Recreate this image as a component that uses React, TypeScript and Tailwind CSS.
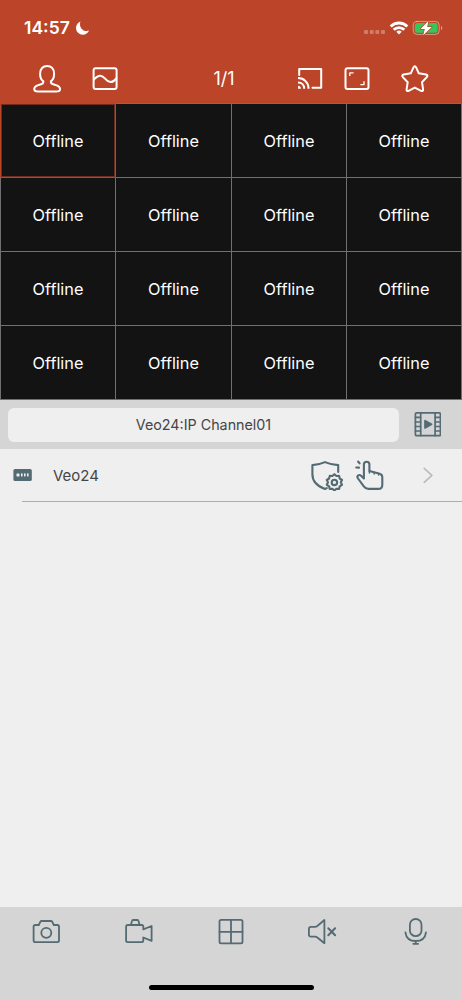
import React from "react";

type IconProps = {
  w: number;
  h: number;
  className?: string;
  sw?: number;
  children: React.ReactNode;
};

function Icon({ w, h, className = "", sw = 2, children }: IconProps) {
  return (
    <svg
      width={w}
      height={h}
      viewBox={`0 0 ${w} ${h}`}
      fill="none"
      stroke="currentColor"
      strokeWidth={sw}
      strokeLinecap="round"
      strokeLinejoin="round"
      className={`block shrink-0 ${className}`}
    >
      {children}
    </svg>
  );
}

function StatusBar() {
  return (
    <div className="flex h-[55px] items-center text-white">
      <span className="ml-[24px] w-[51px] text-[17.5px] leading-[20px] font-semibold whitespace-nowrap">14:57</span>
      <Icon w={16} h={16}>
        <path
          d="M5.4 1.4C3 2.4 1 4.8 1 8a6.8 6.8 0 0 0 6.8 6.8c2.8 0 5.2-1.7 6.2-4.2-4.9 1.7-10.6-2.3-8.6-9.2z"
          fill="currentColor"
          stroke="none"
        />
      </Icon>
      <Icon w={22} h={6} className="ml-[272px] mt-[9px] opacity-30">
        <g fill="currentColor" stroke="none">
          <rect x="1" y="1" width="4" height="4" rx="1" />
          <rect x="6.7" y="1" width="4" height="4" rx="1" />
          <rect x="12.3" y="1" width="4" height="4" rx="1" />
          <rect x="18" y="1" width="4" height="4" rx="1" />
        </g>
      </Icon>
      <Icon w={20} h={16} sw={2.9} className="ml-[4px]">
        <g strokeLinecap="butt">
          <path d="M1.7 6.4a11.7 11.7 0 0 1 16.6 0" />
          <path d="M4.7 9.8a7.5 7.5 0 0 1 10.6 0" />
        </g>
        <path d="M10 14.6l-2.7-2.8a3.9 3.9 0 0 1 5.4 0z" fill="currentColor" stroke="none" />
      </Icon>
      <Icon w={32} h={18} sw={1} className="ml-[3px]">
        <rect x="1.2" y="2.4" width="26" height="13" rx="3.8" className="opacity-45" />
        <path d="M29 6.7c1.8.7 1.8 3.7 0 4.4z" fill="currentColor" stroke="none" className="opacity-50" />
        <rect x="2.8" y="4" width="22.8" height="9.8" rx="2.2" fill="#35c759" stroke="none" />
        <path d="M16.4 1.8 8.6 10h4.2l-1.6 6.2L19.8 8h-4.6z" fill="white" stroke="#bb4429" strokeWidth="1.3" paintOrder="stroke" />
      </Icon>
    </div>
  );
}

function Toolbar() {
  return (
    <div className="flex h-[48px] items-center text-white">
      <Icon w={30} h={32} sw={2} className="ml-[32px]">
        <path d="M11.4 18.4C9 16.8 8.1 14 8.1 10.7 8.1 5.9 11 3 15.1 3s7 2.9 7 7.7c0 3.3-.9 6.1-3.3 7.7 0 1.7.3 2.1 1.7 2.6l4.1 1.4c2.2.8 3.5 2 3.5 3.6 0 2.2-2 2.6-4 2.6H6.1c-2 0-3.9-.4-3.9-2.6 0-1.6 1.3-2.8 3.4-3.6L9.7 21c1.4-.5 1.7-.9 1.7-2.6z" />
      </Icon>
      <Icon w={28} h={26} className="ml-[29px]">
        <rect x="2.6" y="2.2" width="23" height="20.8" rx="2" />
        <path d="M2.9 13.5C8.2 7.7 11.3 9.3 14.1 12.7c3.5 4.3 7.1 4.8 11.2-.2" />
      </Icon>
      <span className="ml-[84px] w-[42px] text-center text-[18px] leading-[22px]">1/1</span>
      <Icon w={30} h={26} className="ml-[50px]">
        <path d="M4.2 9V2.9h22v18.8h-8.7" />
        <g strokeLinecap="butt">
          <path d="M3 12.1c6 0 10.6 4.5 10.6 10.6M3 16.5c3.8 0 6.2 2.5 6.2 6.2" />
        </g>
        <path d="M3 19.8c1.7 0 2.9 1.2 2.9 2.9H3z" fill="currentColor" stroke="none" />
      </Icon>
      <Icon w={28} h={26} className="ml-[18px]">
        <rect x="2.5" y="2.2" width="23" height="20.8" rx="2" />
        <path d="M6.8 10V6.9h3.8M21 15.2v3.4h-3.6" strokeWidth="1.3" strokeLinecap="butt" />
      </Icon>
      <Icon w={30} h={30} className="ml-[29px]">
        <path d="M13.6 3.2c.5-1.2 1.9-1.2 2.4 0l2.8 6.1 7.2 1.2c1.5.3 1.9 1.6.8 2.6L22 18.2l1.1 7.1c.2 1.5-.8 2.1-2 1.5l-6.3-3.2-6.2 3.2c-1.3.6-2.2 0-2-1.5l1.1-7.1-4.9-5.1c-1-1-.6-2.3.8-2.6l7.2-1.2z" />
      </Icon>
    </div>
  );
}

function ChannelGrid() {
  return (
    <div className="grid h-[297px] grid-cols-[114px_115px_114px_114px] grid-rows-[73px_73px_73px_73px] gap-px bg-[#707070] p-px text-white">
      {Array.from({ length: 16 }, (_, i) => (
        <div
          key={i}
          className={`flex items-center justify-center bg-[#131313] pt-px text-[16.3px] leading-[20px] ${
            i === 0 ? "inset-ring inset-ring-[#6e2d1e] outline outline-[#bb4429]" : ""
          }`}
        >
          Offline
        </div>
      ))}
    </div>
  );
}

function ChannelBar() {
  return (
    <div className="flex h-[49px] items-center bg-[#d5d5d5] pl-[8px] text-[#546b74]">
      <div className="flex h-[34px] w-[391px] items-center justify-center rounded-[6px] bg-[#efefef] pt-px text-[14.3px] text-[#454545]">
        Veo24:IP Channel01
      </div>
      <Icon w={28} h={26} sw={1.7} className="ml-[14px]">
        <rect x="2.4" y="0.9" width="25" height="22.8" rx="1.2" />
        <path d="M7.7 1v22.6M22.1 1v22.6" />
        <path d="M2.4 5.4h5M2.4 10h5M2.4 14.5h5M2.4 19h5M22.4 5.4h5M22.4 10h5M22.4 14.5h5M22.4 19h5" />
        <path d="M12 8.7v7.2l6.6-3.6z" fill="currentColor" />
      </Icon>
    </div>
  );
}

function DeviceRow() {
  return (
    <div className="flex h-[52px] items-center text-[#546b74]">
      <Icon w={20} h={14} className="ml-[13px]">
        <rect x="0.4" y="1" width="18.4" height="12" rx="1.6" fill="currentColor" stroke="none" />
        <g fill="#efefef" stroke="none">
          <rect x="3.5" y="5.4" width="3" height="3" rx=".6" />
          <rect x="8" y="5.4" width="1.6" height="3" />
          <rect x="11" y="5.4" width="1.6" height="3" />
          <rect x="14" y="5.4" width="1.6" height="3" />
        </g>
      </Icon>
      <span className="ml-[20px] w-[257px] pt-[2px] text-[15px] text-[#454545]">Veo24</span>
      <Icon w={34} h={32} sw={2.1}>
        <path d="M28.2 13V6.1c-4.8 0-8.4-1-13.2-3-4.6 2-8.2 3-12.6 3v9.2c0 6.5 4.6 11.8 12.6 14.7l1.8-.9" />
        <path d="m24.4 15.2 2 1.8 2.7-.1.6 2.6 2.3 1.5-1.2 2.4 1.2 2.4-2.3 1.5-.6 2.6-2.7-.1-2 1.7-2-1.7-2.7.1-.6-2.6-2.3-1.5 1.2-2.4-1.2-2.4 2.3-1.5.6-2.6 2.7.1z" />
        <circle cx="24.4" cy="23.4" r="2.7" />
      </Icon>
      <Icon w={32} h={34} sw={2.1} className="ml-[10px]">
        <path d="M9.9 20.5V6.5c0-3.7 5.5-3.7 5.5 0v6.4l10.3 2.8c1.8.5 2.6 1.8 2.6 3.6v7.6c0 2.6-1.5 4-4.1 4H14.5c-2.1 0-3.5-.8-4.7-2.5l-5.8-7.9c-1.8-2.7 1.2-4.6 3.3-2.6z" />
        <path d="M15.4 13v2.1M20.2 14.2v1.7M24.6 15.4v1.5" strokeWidth="1.5" />
        <path d="M4.1 3.5 5.6 5.4M2.2 9.5l2.8.1" />
      </Icon>
      <Icon w={14} h={20} sw={1.7} className="ml-[35px] text-[#bcbcbc]">
        <path d="m3.2 3.3 7.7 7-7.7 7" />
      </Icon>
    </div>
  );
}

function BottomBar() {
  return (
    <div className="mt-auto flex h-[93px] flex-col items-center bg-[#d5d5d5] text-[#546b74]">
      <div className="grid w-full grid-cols-5 justify-items-center pt-[10px]">
        <Icon w={30} h={30} sw={1.8}>
          <path d="M4.2 8h3.6l1.5-3.2c.3-.6.7-.8 1.4-.8h9.2c.7 0 1.1.2 1.4.8L22.8 8h3.6c1 0 1.6.6 1.6 1.6v14c0 1-.6 1.6-1.6 1.6H4.2c-1 0-1.6-.6-1.6-1.6v-14C2.6 8.6 3.2 8 4.2 8z" />
          <circle cx="15.3" cy="15.8" r="5" />
        </Icon>
        <Icon w={30} h={30} sw={1.8}>
          <path d="M19.3 12.4V9.6c0-1-.6-1.6-1.6-1.6h-14c-1 0-1.6.6-1.6 1.6v14c0 1 .6 1.6 1.6 1.6h14c1 0 1.6-.6 1.6-1.6v-3.1l8.3 3.3V9z" />
          <path d="M7 7.8 8 3.9c.1-.6.5-.9 1.1-.9h4.3c.6 0 1 .3 1.1.9l1 3.9" />
        </Icon>
        <Icon w={30} h={30} sw={1.8}>
          <rect x="3.5" y="2.9" width="23" height="23.4" rx="1.6" />
          <path d="M15 3v23M3.5 14.8h23" />
        </Icon>
        <Icon w={30} h={30} sw={1.8}>
          <path d="M16.4 3v23.2L9 20.2c-.6-.4-1-.6-1.8-.6H3c-1.3 0-2.1-.8-2.1-2.1v-5.6c0-1.3.8-2.1 2.1-2.1h4.2c.8 0 1.2-.2 1.8-.6z" />
          <path d="m20.3 11.2 6.8 7M27.1 11.2l-6.8 7" strokeWidth="2" />
        </Icon>
        <Icon w={30} h={30} sw={1.8}>
          <rect x="8.9" y="2" width="11.6" height="17.2" rx="5.8" />
          <path d="M4.4 15.3c.7 5.5 4.7 8.7 10.3 8.7s9.6-3.2 10.3-8.7M14.7 24.2v2.4M12.3 26.8h4.8" />
        </Icon>
      </div>
      <div className="mt-[38px] h-[5px] w-[165px] rounded-full bg-black" />
    </div>
  );
}

export default function App() {
  return (
    <div className="flex h-[1000px] w-[462px] flex-col overflow-hidden bg-[#efefef] font-['Inter','Liberation_Sans',sans-serif]">
      <header className="h-[103px] bg-[#bb4429]">
        <StatusBar />
        <Toolbar />
      </header>
      <ChannelGrid />
      <ChannelBar />
      <DeviceRow />
      <div className="ml-[22px] h-px bg-[#adadad]" />
      <BottomBar />
    </div>
  );
}
